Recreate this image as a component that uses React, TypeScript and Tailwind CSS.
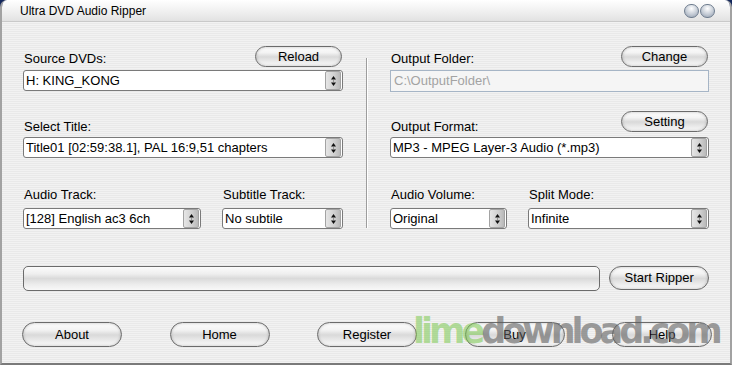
import React from "react";

function Pill({ label, className = "" }: { label: string; className?: string }) {
  return (
    <div
      className={`flex items-center justify-center rounded-full border border-[#6b6b6b] bg-[linear-gradient(to_bottom,#fdfdfd_0%,#f3f3f3_30%,#d9d9d9_52%,#ececec_78%,#fafafa_100%)] shadow-[inset_0_0_3px_rgba(0,0,0,0.25)] text-[13px] leading-[16px] text-black ${className}`}
    >
      {label}
    </div>
  );
}

function Spinner() {
  return (
    <div className="flex h-[19px] w-[16px] items-center justify-center rounded-[2px] border border-[#a3a3a3] bg-[linear-gradient(to_right,#e6e6e6,#cfcfcf_60%,#b9b9b9)]">
      <svg width="7" height="12" viewBox="0 0 7 12">
        <polygon points="3.5,1 6,4.5 1,4.5" fill="#111" />
        <rect x="3" y="5.5" width="1" height="1" fill="#555" />
        <polygon points="1,7.5 6,7.5 3.5,11" fill="#111" />
      </svg>
    </div>
  );
}

function Select({ value, className = "" }: { value: string; className?: string }) {
  return (
    <div
      className={`flex h-[21px] items-center rounded-[3px] border border-[#7a7a7a] bg-white pl-[2px] pr-px ${className}`}
    >
      <span className="flex-1 truncate text-[13px] leading-[16px]">{value}</span>
      <Spinner />
    </div>
  );
}

function Label({ text, className = "" }: { text: string; className?: string }) {
  return <div className={`text-[13px] leading-[16px] text-black ${className}`}>{text}</div>;
}

export default function App() {
  return (
    <div className="relative h-[365px] w-[732px] overflow-hidden bg-[#13275c] font-['Liberation_Sans',Arial,sans-serif]">
      <div className="flex h-full flex-col overflow-hidden rounded-t-[7px] border-x-2 border-b-2 border-x-[#a2a2a2] border-b-[#7a7a7a]">
        {/* title bar */}
        <div className="flex h-[22px] items-center justify-between border-b border-[#c9c9c9] bg-[linear-gradient(to_bottom,#ffffff,#f1f1f1_50%,#e2e2e2)] pl-[18px] pr-[15px]">
          <span className="text-[12px] text-black">Ultra DVD Audio Ripper</span>
          <div className="flex gap-px">
            <div className="h-[14px] w-[15px] rounded-full border border-[#6f7d8f] bg-[radial-gradient(circle_at_50%_30%,#ffffff,#c5ccd6_55%,#8e9aab)]" />
            <div className="h-[14px] w-[15px] rounded-full border border-[#6f7d8f] bg-[radial-gradient(circle_at_50%_30%,#ffffff,#c5ccd6_55%,#8e9aab)]" />
          </div>
        </div>

        {/* body */}
        <div className="flex-1 bg-[repeating-linear-gradient(0deg,#f2f2f2_0px,#f2f2f2_1px,#e9e9e9_1px,#e9e9e9_2px)] px-[21px] pt-[24px]">
          <div className="flex">
            {/* left column */}
            <div className="w-[321px]">
              <div className="flex h-[21px] items-start justify-between">
                <Label text="Source DVDs:" className="mt-[5px] pl-px" />
                <Pill label="Reload" className="mr-px h-[21px] w-[87px]" />
              </div>
              <Select value="H: KING_KONG" className="mt-[3px]" />

              <div className="mt-[20px] flex h-[21px] items-start">
                <Label text="Select Title:" className="mt-[8px] pl-px" />
              </div>
              <Select value="Title01 [02:59:38.1], PAL 16:9,51 chapters" className="mt-[5px]" />

              <div className="mt-[29px] flex gap-[21px]">
                <div className="w-[178px]">
                  <Label text="Audio Track:" className="pl-px" />
                  <Select value="[128] English ac3 6ch" className="mt-[5px]" />
                </div>
                <div className="flex-1">
                  <Label text="Subtitle Track:" className="pl-px" />
                  <Select value="No subtile" className="mt-[5px]" />
                </div>
              </div>
            </div>

            {/* divider */}
            <div className="ml-[23px] mt-[12px] h-[170px] w-[2px] border-l border-r border-l-[#9d9d9d] border-r-white" />

            {/* right column */}
            <div className="ml-[22px] w-[320px]">
              <div className="flex h-[21px] items-start justify-between">
                <Label text="Output Folder:" className="mt-[5px] pl-px" />
                <Pill label="Change" className="mr-px h-[21px] w-[87px]" />
              </div>
              <div className="mt-[3px] flex h-[22px] items-center border border-[#a6b5c6] bg-[#f5f5f5] pl-[3px] text-[13px] leading-[16px] text-[#a3a3a3]">
                C:\OutputFolder\
              </div>

              <div className="mt-[19px] flex h-[21px] items-start justify-between">
                <Label text="Output Format:" className="mt-[8px] pl-px" />
                <Pill label="Setting" className="mr-px h-[21px] w-[87px]" />
              </div>
              <Select value="MP3 - MPEG Layer-3 Audio (*.mp3)" className="mt-[5px]" />

              <div className="mt-[29px] flex gap-[21px]">
                <div className="w-[117px]">
                  <Label text="Audio Volume:" className="pl-px" />
                  <Select value="Original" className="mt-[5px]" />
                </div>
                <div className="flex-1">
                  <Label text="Split Mode:" className="pl-px" />
                  <Select value="Infinite" className="mt-[5px]" />
                </div>
              </div>
            </div>
          </div>

          {/* progress */}
          <div className="mt-[37px] flex items-start gap-[9px]">
            <div className="h-[25px] w-[580px] rounded-[5px] border border-[#6b6b6b] bg-[linear-gradient(to_bottom,#fbfbfb_0%,#efefef_30%,#dadada_50%,#ececec_75%,#f8f8f8_100%)]" />
            <Pill label="Start Ripper" className="h-[24px] w-[100px]" />
          </div>

          {/* bottom buttons */}
          <div className="-ml-px mt-[31px] flex w-[690px] justify-between">
            <Pill label="About" className="h-[25px] w-[100px]" />
            <Pill label="Home" className="h-[25px] w-[100px]" />
            <Pill label="Register" className="h-[25px] w-[100px]" />
            <Pill label="Buy" className="h-[25px] w-[100px]" />
            <Pill label="Help" className="h-[25px] w-[100px]" />
          </div>
        </div>
      </div>

      {/* watermark */}
      <div className="pointer-events-none absolute left-[413px] top-[312px] whitespace-nowrap font-['DejaVu_Sans',sans-serif] text-[35px] font-bold leading-[38px] tracking-[-4px]">
        <span className="text-[rgba(120,200,75,0.55)]">lime</span>
        <span className="text-[rgba(95,95,95,0.6)]">download.com</span>
      </div>
    </div>
  );
}
